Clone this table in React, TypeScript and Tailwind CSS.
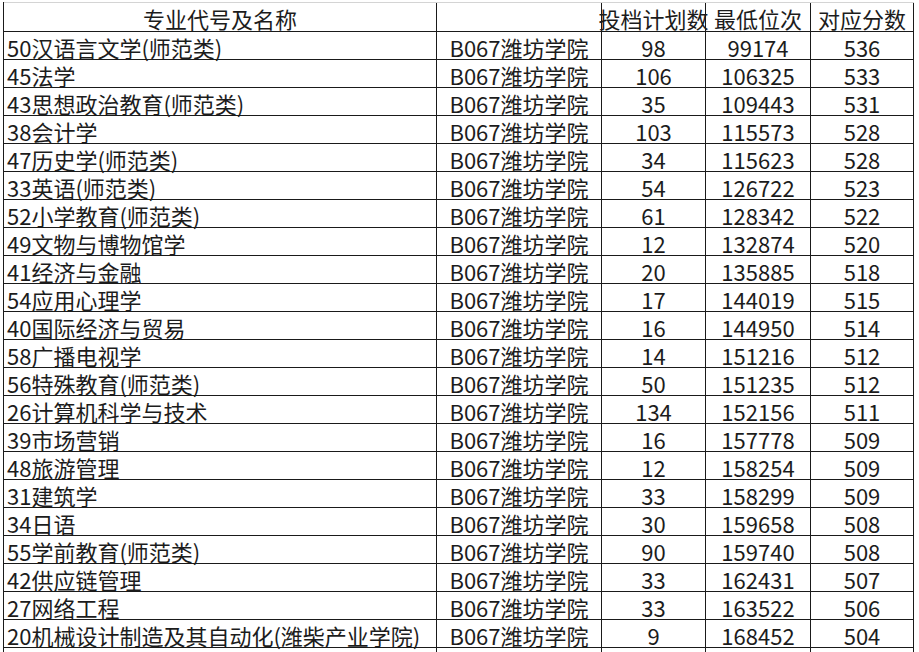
const rows: [string, string, string, string][] = [
  ["50汉语言文学(师范类)", "98", "99174", "536"],
  ["45法学", "106", "106325", "533"],
  ["43思想政治教育(师范类)", "35", "109443", "531"],
  ["38会计学", "103", "115573", "528"],
  ["47历史学(师范类)", "34", "115623", "528"],
  ["33英语(师范类)", "54", "126722", "523"],
  ["52小学教育(师范类)", "61", "128342", "522"],
  ["49文物与博物馆学", "12", "132874", "520"],
  ["41经济与金融", "20", "135885", "518"],
  ["54应用心理学", "17", "144019", "515"],
  ["40国际经济与贸易", "16", "144950", "514"],
  ["58广播电视学", "14", "151216", "512"],
  ["56特殊教育(师范类)", "50", "151235", "512"],
  ["26计算机科学与技术", "134", "152156", "511"],
  ["39市场营销", "16", "157778", "509"],
  ["48旅游管理", "12", "158254", "509"],
  ["31建筑学", "33", "158299", "509"],
  ["34日语", "30", "159658", "508"],
  ["55学前教育(师范类)", "90", "159740", "508"],
  ["42供应链管理", "33", "162431", "507"],
  ["27网络工程", "33", "163522", "506"],
  ["20机械设计制造及其自动化(潍柴产业学院)", "9", "168452", "504"],
];

const grid = "grid grid-cols-[433px_165px_104px_105px_103px]";
const cell = "flex items-center whitespace-nowrap border-r border-[#1a1a1a] pt-[2px] leading-[24px]";

export default function App() {
  return (
    <div
      className="min-h-screen bg-white pt-[2px] pl-[3px] text-[22px] text-[#1c1c1c]"
      style={{ fontFamily: '"Noto Sans CJK SC", "Noto Sans", sans-serif' }}
    >
      <div className="w-[911px] border-l border-[#1a1a1a]">
        {/* header */}
        <div className={`${grid} h-[30px] border-t border-b border-t-[#d4d4d4] border-b-[#1a1a1a]`}>
          <div className={`${cell} justify-center`}>专业代号及名称</div>
          <div className={`${cell}`}></div>
          <div className={`${cell} justify-center overflow-visible`}>投档计划数</div>
          <div className={`${cell} justify-center`}>最低位次</div>
          <div className={`${cell} justify-center`}>对应分数</div>
        </div>

        {rows.map(([name, plan, rank, score]) => (
          <div key={name} className={`${grid} h-[28px] border-b border-[#1a1a1a]`}>
            <div className={`${cell} pl-[3px]`}>{name}</div>
            <div className={`${cell} justify-center`}>B067潍坊学院</div>
            <div className={`${cell} justify-center`}>{plan}</div>
            <div className={`${cell} justify-center`}>{rank}</div>
            <div className={`${cell} justify-center`}>{score}</div>
          </div>
        ))}

        <div className={`${grid} h-[28px]`}>
          <div className={cell}></div>
          <div className={cell}></div>
          <div className={cell}></div>
          <div className={cell}></div>
          <div className={cell}></div>
        </div>
      </div>
    </div>
  );
}
